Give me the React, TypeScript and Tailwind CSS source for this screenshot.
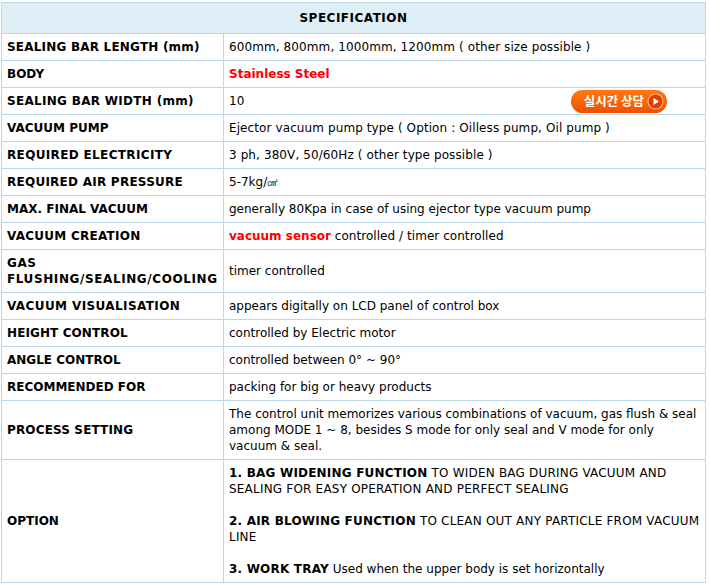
const rows: { label: string; labelCls?: string; valueCls?: string; h: string; value: React.ReactNode }[] = [
  { label: "SEALING BAR LENGTH (mm)", labelCls: "tracking-[0.2px]", valueCls: "tracking-[0.1px]", h: "h-[27px]", value: "600mm, 800mm, 1000mm, 1200mm ( other size possible )" },
  { label: "BODY", h: "h-[27px]", value: <b className="text-[#ff0000]">Stainless Steel</b> },
  {
    label: "SEALING BAR WIDTH (mm)",
    labelCls: "tracking-[0.3px]",
    h: "h-[27px]",
    value: (
      <div className="flex items-center justify-between pr-[33px]">
        <span>10</span>
        <LiveChat />
      </div>
    ),
  },
  { label: "VACUUM PUMP", valueCls: "tracking-[0.1px]", h: "h-[27px]", value: "Ejector vacuum pump type ( Option : Oilless pump, Oil pump )" },
  { label: "REQUIRED ELECTRICITY", labelCls: "tracking-[0.35px]", valueCls: "tracking-[0.1px]", h: "h-[27px]", value: "3 ph, 380V, 50/60Hz ( other type possible )" },
  {
    label: "REQUIRED AIR PRESSURE",
    labelCls: "tracking-[0.25px]",
    h: "h-[27px]",
    value: (
      <>
        5-7kg/<span className="text-[11px]">㎠</span>
      </>
    ),
  },
  { label: "MAX. FINAL VACUUM", h: "h-[27px]", value: "generally 80Kpa in case of using ejector type vacuum pump" },
  {
    label: "VACUUM CREATION",
    labelCls: "tracking-[0.25px]",
    h: "h-[27px]",
    value: (
      <>
        <b className="text-[#ff0000]">vacuum sensor</b> <span className="tracking-[0.05px]">controlled / timer controlled</span>
      </>
    ),
  },
  { label: "GAS FLUSHING/SEALING/COOLING", labelCls: "tracking-[0.6px]", h: "h-[43px]", value: "timer controlled" },
  { label: "VACUUM VISUALISATION", labelCls: "tracking-[0.4px]", h: "h-[27px]", value: "appears digitally on LCD panel of control box" },
  { label: "HEIGHT CONTROL", labelCls: "tracking-[0.1px]", h: "h-[27px]", value: "controlled by Electric motor" },
  { label: "ANGLE CONTROL", h: "h-[27px]", value: "controlled between 0° ~ 90°" },
  { label: "RECOMMENDED FOR", h: "h-[27px]", value: "packing for big or heavy products" },
  {
    label: "PROCESS SETTING",
    labelCls: "tracking-[0.15px]",
    h: "h-[59px]",
    value:
      "The control unit memorizes various combinations of vacuum, gas flush & seal among MODE 1 ~ 8, besides S mode for only seal and V mode for only vacuum & seal.",
  },
  {
    label: "OPTION",
    h: "h-[123px]",
    value: (
      <>
        <span className="tracking-[0.2px]">
          <b>1. BAG WIDENING FUNCTION</b> TO WIDEN BAG DURING VACUUM AND SEALING FOR EASY OPERATION AND PERFECT SEALING
        </span>
        <br />
        <br />
        <span className="tracking-[0.2px]">
          <b>2. AIR BLOWING FUNCTION</b> TO CLEAN OUT ANY PARTICLE FROM VACUUM LINE
        </span>
        <br />
        <br />
        <b className="tracking-[0.2px]">3. WORK TRAY</b> Used when the upper body is set horizontally
      </>
    ),
  },
];

function LiveChat() {
  return (
    <div className="flex h-[23px] w-[96px] items-center justify-end gap-[3px] rounded-full bg-gradient-to-b from-[#ff7a12] to-[#f04f00] pr-[3px] text-white">
      <span className="text-[12.5px] font-bold leading-none [font-family:'Noto_Sans_CJK_KR',sans-serif]">실시간 상담</span>
      <svg width="17" height="17" viewBox="0 0 17 17">
        <circle cx="8.5" cy="8.5" r="7.5" fill="#e23c00" stroke="#ffb27a" strokeWidth="1.2" />
        <path d="M6.5 5 L12 8.5 L6.5 12 Z" fill="#fff" />
      </svg>
    </div>
  );
}

export default function App() {
  return (
    <div className="h-[584px] w-[709px] bg-white pl-px pt-[2px] text-[12px] leading-[16px] text-black [font-family:'DejaVu_Sans',sans-serif]">
      <table className="w-[705px] table-fixed border-collapse">
        <colgroup>
          <col className="w-[222px]" />
          <col />
        </colgroup>
        <tbody>
          <tr className="h-[31px] bg-[#deedf6]">
            <th colSpan={2} className="border border-[#bcd7e9] text-center text-[12px] font-bold tracking-[0.5px]">
              SPECIFICATION
            </th>
          </tr>
          {rows.map((row, i) => (
            <tr key={i} className={row.h}>
              <td className={`border border-[#bcd7e9] px-[5px] py-0 font-bold ${row.labelCls ?? ""}`}>{row.label}</td>
              <td className={`border border-[#bcd7e9] px-[5px] py-0 ${row.valueCls ?? ""}`}>{row.value}</td>
            </tr>
          ))}
        </tbody>
      </table>
    </div>
  );
}
